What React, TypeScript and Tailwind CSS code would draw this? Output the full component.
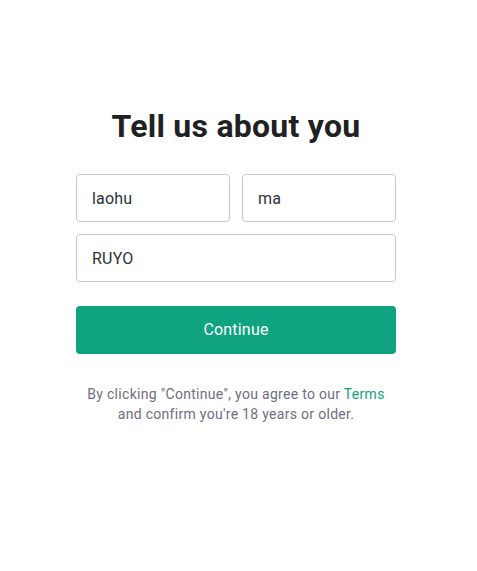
export default function App() {
  return (
    <div
      className="min-h-[571px] w-full bg-white flex justify-center pr-[5px]"
      style={{ fontFamily: 'Roboto, "Noto Sans", sans-serif' }}
    >
      <div className="w-[320px] pt-[104px] flex flex-col items-center">
        <h1 className="text-[32px] leading-[44px] font-bold text-[#202123] tracking-[0.25px]">
          Tell us about you
        </h1>

        <div className="mt-[26px] w-full flex flex-col gap-3">
          <div className="flex gap-3">
            <input
              type="text"
              defaultValue="laohu"
              className="w-full h-[48px] rounded-[4px] border border-[#c2c8d0] px-[15px] text-[16px] tracking-[0.2px] text-[#2d333a] focus:outline-none"
            />
            <input
              type="text"
              defaultValue="ma"
              className="w-full h-[48px] rounded-[4px] border border-[#c2c8d0] px-[15px] text-[16px] tracking-[0.2px] text-[#2d333a] focus:outline-none"
            />
          </div>
          <input
            type="text"
            defaultValue="RUYO"
            className="w-full h-[48px] rounded-[4px] border border-[#c2c8d0] px-[15px] text-[16px] tracking-[0.2px] text-[#2d333a] focus:outline-none"
          />
        </div>

        <button className="mt-6 w-full h-[48px] rounded-[4px] bg-[#10a37f] text-white text-[16px] tracking-[0.2px]">
          Continue
        </button>

        <p className="mt-[30px] text-center text-[14px] leading-[20px] text-[#6e6e80] tracking-[0.3px]">
          By clicking "Continue", you agree to our{' '}
          <a href="#" className="text-[#10a37f]">
            Terms
          </a>
          <br />
          and confirm you're 18 years or older.
        </p>
      </div>
    </div>
  );
}
